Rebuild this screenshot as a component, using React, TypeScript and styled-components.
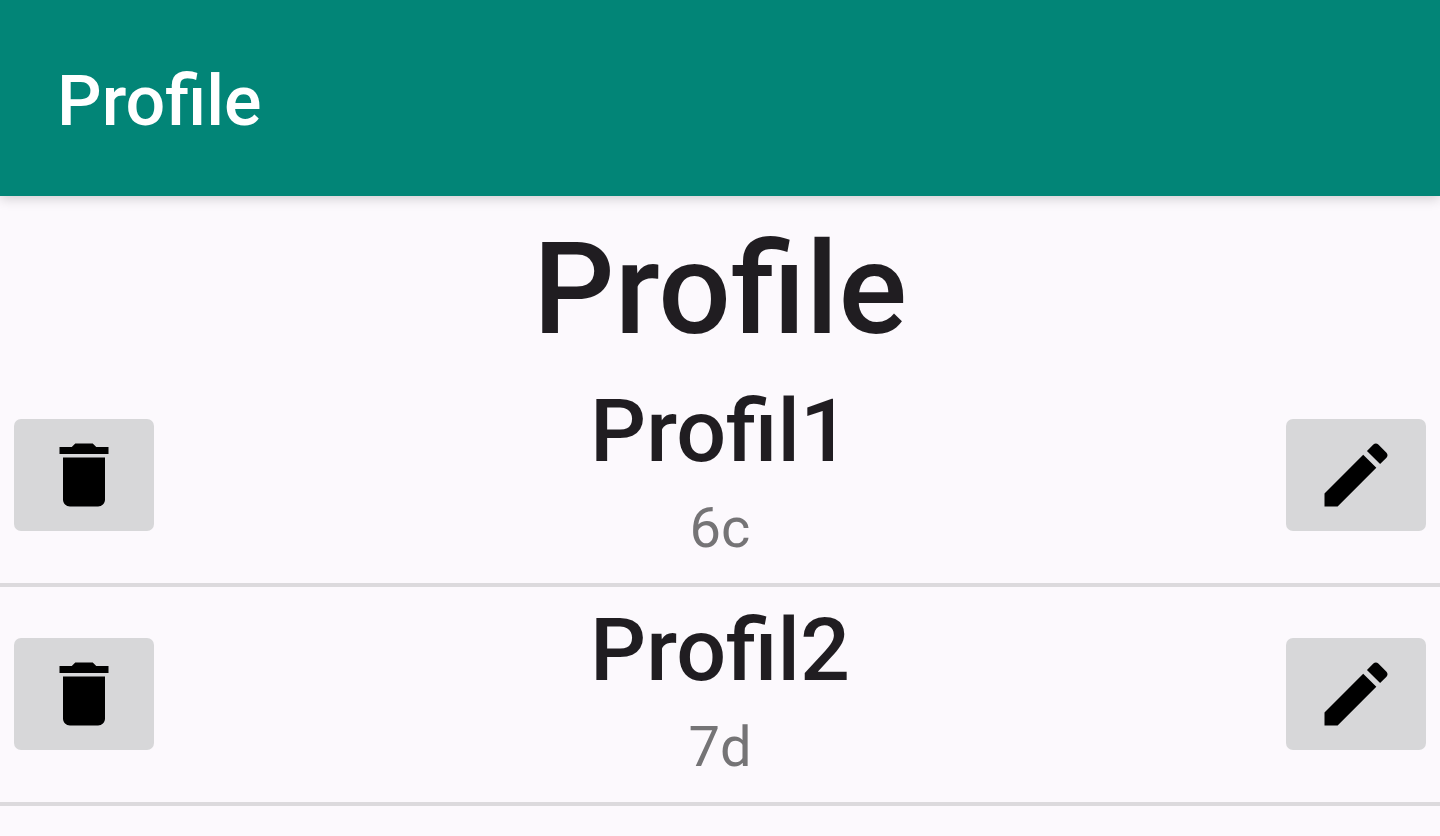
import React from "react";
import styled, { createGlobalStyle } from "styled-components";

const GlobalStyle = createGlobalStyle`
  *, *::before, *::after { box-sizing: border-box; }
  body {
    margin: 0;
    background: #fcf9fd;
    color: #201d21;
    font-family: Roboto, "Noto Sans", sans-serif;
  }
`;

const AppBar = styled.header`
  display: flex;
  align-items: center;
  padding: 59px 57px 53px;
  background: #028577;
  color: #ffffff;
  box-shadow: 0 2px 12px rgba(0, 0, 0, 0.2);
`;

const AppTitle = styled.div`
  font-size: 70px;
  font-weight: 500;
  line-height: 84px;
`;

const PageTitle = styled.h1`
  margin: 0;
  padding-top: 17px;
  font-size: 128px;
  font-weight: 500;
  line-height: 152px;
  text-align: center;
`;

const ProfileList = styled.ul`
  margin: 0;
  padding: 3px 0 0;
  list-style: none;
`;

const ProfileRow = styled.li`
  display: flex;
  align-items: center;
  justify-content: space-between;
  padding: 10px 14px 11px;
  border-bottom: 4px solid #dcdadd;
`;

const Details = styled.div`
  text-align: center;
`;

const Name = styled.h2`
  margin: 0;
  font-size: 88px;
  font-weight: 500;
  line-height: 106px;
`;

const Grade = styled.p`
  margin: 0;
  color: #757476;
  font-size: 56px;
  line-height: 88px;
`;

const IconButton = styled.button`
  display: flex;
  align-items: center;
  justify-content: center;
  width: 140px;
  height: 112px;
  padding: 0;
  border: 0;
  border-radius: 7px;
  background: #d7d7d9;
  color: #000000;
  cursor: pointer;
`;

const Icon = styled.svg`
  width: 84px;
  height: 84px;
  fill: currentColor;
`;

const DeleteIcon = () => (
  <Icon viewBox="0 0 24 24" aria-hidden="true">
    <path d="M6 19c0 1.1.9 2 2 2h8c1.1 0 2-.9 2-2V7H6v12zM19 4h-3.500l-1-1h-5l-1 1H5v2h14V4z" />
  </Icon>
);

const EditIcon = () => (
  <Icon viewBox="0 0 24 24" aria-hidden="true">
    <path d="M3 17.250V21h3.750L17.810 9.940l-3.750-3.750L3 17.250zM20.710 7.040c.39-.39.39-1.020 0-1.410l-2.340-2.340c-.39-.39-1.020-.39-1.410 0l-1.830 1.830 3.750 3.750 1.830-1.830z" />
  </Icon>
);

const profiles = [
  { name: "Profil1", grade: "6c" },
  { name: "Profil2", grade: "7d" },
];

export default function App() {
  return (
    <>
      <GlobalStyle />
      <AppBar>
        <AppTitle>Profile</AppTitle>
      </AppBar>
      <main>
        <PageTitle>Profile</PageTitle>
        <ProfileList>
          {profiles.map(({ name, grade }) => (
            <ProfileRow key={name}>
              <IconButton type="button" aria-label={`Delete ${name}`}>
                <DeleteIcon />
              </IconButton>
              <Details>
                <Name>{name}</Name>
                <Grade>{grade}</Grade>
              </Details>
              <IconButton type="button" aria-label={`Edit ${name}`}>
                <EditIcon />
              </IconButton>
            </ProfileRow>
          ))}
        </ProfileList>
      </main>
    </>
  );
}
